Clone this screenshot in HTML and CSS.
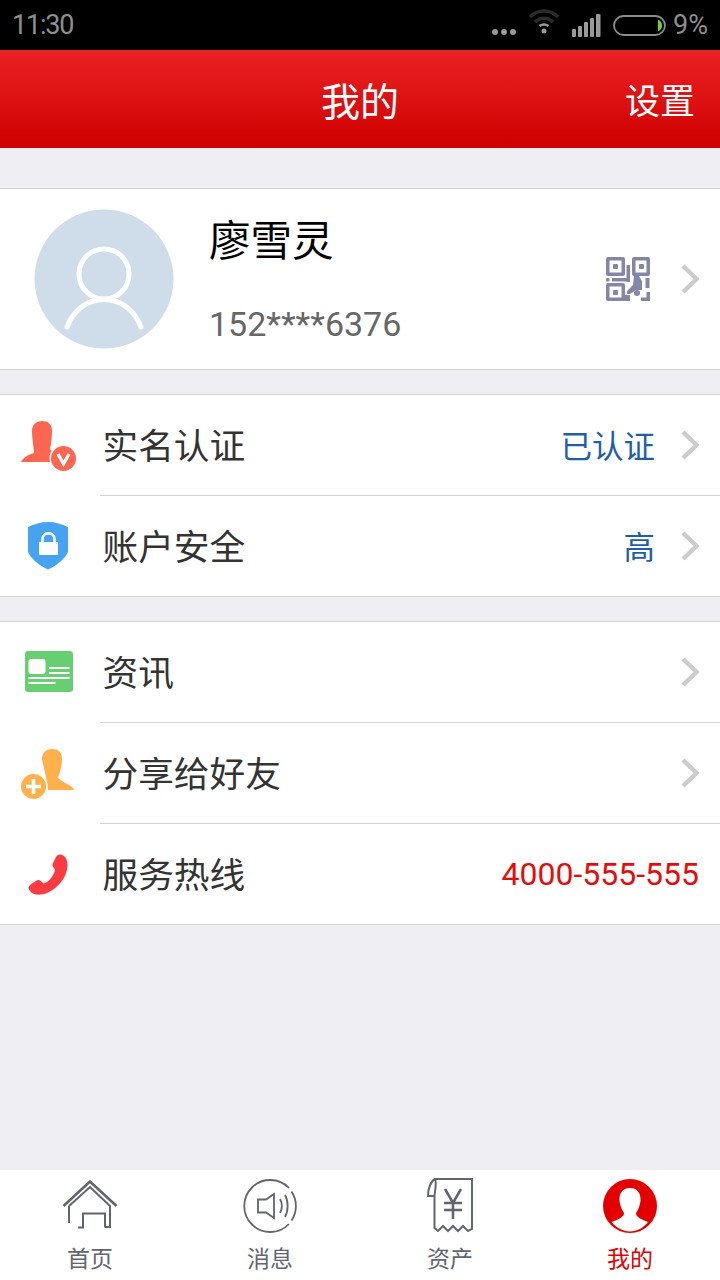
FILE: index.html
```html
<!DOCTYPE html>
<html lang="zh-CN">
<head>
    <meta charset="UTF-8">
    <meta name="viewport" content="width=device-width, initial-scale=1.0">
    <title>我的</title>
    <link rel="stylesheet" href="styles.css">
</head>
<body>

    <div class="status-bar">
        <span class="status-time">11:30</span>
        <div class="status-right">
            <svg class="status-dots" width="26" height="8" viewBox="0 0 26 8"><circle cx="4" cy="4" r="3"/><circle cx="13" cy="4" r="3"/><circle cx="22" cy="4" r="3"/></svg>
            <svg class="status-wifi" width="32" height="26" viewBox="0 0 32 26" fill="none">
                <path d="M2 9C10 1 22 1 30 9" stroke="#2b2b2b" stroke-width="3.5"/>
                <path d="M7 14C12 9 20 9 25 14" stroke="#2b2b2b" stroke-width="3.5"/>
                <path d="M11.500 18C14 16 18 16 20.500 18" stroke="#9a9a9a" stroke-width="2.500"/>
                <circle cx="16" cy="23" r="2.500" fill="#9a9a9a"/>
            </svg>
            <svg class="status-signal" width="29" height="23" viewBox="0 0 29 23" fill="#9a9a9a">
                <rect x="0" y="15" width="4" height="8" rx="1"/><rect x="6" y="12" width="4" height="11" rx="1"/><rect x="12" y="8" width="4" height="15" rx="1"/><rect x="18" y="4" width="4" height="19" rx="1"/><rect x="24" y="0" width="4.500" height="23" rx="1"/>
            </svg>
            <svg class="status-battery" width="53" height="21" viewBox="0 0 53 21">
                <rect x="1" y="1" width="51" height="19" rx="9.500" fill="none" stroke="#8c8c8c" stroke-width="1.800"/>
                <path d="M45 4.500C48 6 49 8 49 10.500C49 13 48 15 45 16.500Z" fill="#74d12a"/>
            </svg>
            <span class="status-percent">9%</span>
        </div>
    </div>

    <div class="title-bar">
        <h1>我的</h1>
        <a class="title-action">设置</a>
    </div>

    <div class="profile-card">
        <svg class="avatar" width="140" height="140" viewBox="0 0 140 140">
            <circle cx="70" cy="70" r="69.500" fill="#cfddeb"/>
            <circle cx="70" cy="65" r="25" fill="none" stroke="#fff" stroke-width="5"/>
            <path d="M33 118C40 100 54 90.500 70 90.500C86 90.500 100 100 107 118" fill="none" stroke="#fff" stroke-width="5" stroke-linecap="round"/>
        </svg>
        <div class="profile-info">
            <div class="profile-name">廖雪灵</div>
            <div class="profile-phone">152****6376</div>
        </div>
        <svg class="qr-icon" width="44" height="44" viewBox="0 0 44 44" fill="#8585a6">
            <path fill-rule="evenodd" d="M2 0H17Q19 0 19 2V17Q19 19 17 19H2Q0 19 0 17V2Q0 0 2 0ZM3.500 3.500V15.500H15.500V3.500Z"/>
            <rect x="7" y="7" width="5" height="5" rx="1"/>
            <path fill-rule="evenodd" d="M28 0H42Q44 0 44 2V17Q44 19 42 19H28Q26 19 26 17V2Q26 0 28 0ZM29.500 3.500V15.500H40.500V3.500Z"/>
            <rect x="33" y="7" width="5" height="5" rx="1"/>
            <path fill-rule="evenodd" d="M2 26H17Q19 26 19 28V42Q19 44 17 44H2Q0 44 0 42V28Q0 26 2 26ZM3.500 29.500V40.500H15.500V29.500Z"/>
            <rect x="7" y="33" width="5" height="5" rx="1"/>
            <rect x="0" y="21" width="3.500" height="3.500" rx="1"/>
            <rect x="6" y="21" width="15" height="3.500"/>
            <rect x="20.500" y="8" width="3.500" height="17"/>
            <path d="M28 19H33L36 24V33H30L24 37H21V34L27 28Z"/>
            <rect x="39.500" y="21" width="4" height="10"/>
            <circle cx="31" cy="36" r="3"/>
            <path d="M18 38H24V44H17Z"/>
            <path d="M35 44H44V35H40.500V40.500H35Z"/>
        </svg>
        <svg class="chevron" width="18" height="30" viewBox="0 0 18 30"><path d="M2 2L15.500 15L2 28" fill="none" stroke="#cccccc" stroke-width="4.500"/></svg>
    </div>

    <div class="list-group">
        <div class="list-row">
            <div class="row-icon">
                <svg width="56" height="50" viewBox="0 0 56 50">
                    <path fill="#fb6650" d="M12 10C12 3 17 0 22 0C28 0 32 3 32 10C32 17 31 24 30 28L35 34V41H1C3 36 10 33 14 32C14 28 12 18 12 10Z"/>
                    <circle cx="43.500" cy="37.500" r="14" fill="#fff"/>
                    <circle cx="43.500" cy="37.500" r="12.500" fill="#fb6650"/>
                    <path d="M38 33L43.500 43L49 33" fill="none" stroke="#fff" stroke-width="3.200"/>
                </svg>
            </div>
            <div class="row-body">
                <span class="row-label">实名认证</span>
                <span class="row-value">已认证</span>
                <svg class="chevron" width="18" height="30" viewBox="0 0 18 30"><path d="M2 2L15.500 15L2 28" fill="none" stroke="#cccccc" stroke-width="4.500"/></svg>
            </div>
        </div>
        <div class="list-row">
            <div class="row-icon">
                <svg width="42" height="48" viewBox="0 0 42 48">
                    <path fill="#46a3f0" d="M21 0C28 0 35 2 41 5V30C38 37 29 44 21 47.500C13 44 4 37 1 30V5C7 2 14 0 21 0Z"/>
                    <rect x="12" y="20" width="19" height="13" rx="1" fill="#fff"/>
                    <path d="M15.500 21V17C15.500 9.500 27.500 9.500 27.500 17V21" fill="none" stroke="#fff" stroke-width="2.600"/>
                </svg>
            </div>
            <div class="row-body">
                <span class="row-label">账户安全</span>
                <span class="row-value">高</span>
                <svg class="chevron" width="18" height="30" viewBox="0 0 18 30"><path d="M2 2L15.500 15L2 28" fill="none" stroke="#cccccc" stroke-width="4.500"/></svg>
            </div>
        </div>
    </div>

    <div class="list-group">
        <div class="list-row">
            <div class="row-icon">
                <svg class="news-icon" width="48" height="41" viewBox="0 0 48 41">
                    <rect width="48" height="41" rx="3" fill="#67cf72"/>
                    <rect x="3.500" y="8" width="17" height="15" rx="3" fill="#fff"/>
                    <rect x="24" y="16" width="20.500" height="2" fill="#fff"/>
                    <rect x="24" y="21" width="20.500" height="2" fill="#fff"/>
                    <rect x="3.500" y="26" width="41" height="2" fill="#fff"/>
                    <rect x="3.500" y="31" width="27" height="2" fill="#fff"/>
                </svg>
            </div>
            <div class="row-body">
                <span class="row-label">资讯</span>
                <svg class="chevron" width="18" height="30" viewBox="0 0 18 30"><path d="M2 2L15.500 15L2 28" fill="none" stroke="#cccccc" stroke-width="4.500"/></svg>
            </div>
        </div>
        <div class="list-row">
            <div class="row-icon">
                <svg width="54" height="50" viewBox="0 0 54 50">
                    <path fill="#fdb04c" d="M21 10C21 3 26 0 31 0C37 0 41 3 41 10C41 17 39 24 37 28C38 32 47 34 52 39L53 41H27C27 35 23 20 21 10Z"/>
                    <circle cx="12.500" cy="37.500" r="14" fill="#fff"/>
                    <circle cx="12.500" cy="37.500" r="12.500" fill="#fdb04c"/>
                    <path d="M12.500 30V45M5 37.500H20" stroke="#fff" stroke-width="3.600"/>
                </svg>
            </div>
            <div class="row-body">
                <span class="row-label">分享给好友</span>
                <svg class="chevron" width="18" height="30" viewBox="0 0 18 30"><path d="M2 2L15.500 15L2 28" fill="none" stroke="#cccccc" stroke-width="4.500"/></svg>
            </div>
        </div>
        <div class="list-row">
            <div class="row-icon">
                <svg width="40" height="41" viewBox="0 0 40 41">
                    <path fill="#fb3a42" d="M28 3C30 0 33 0 35 1.500C38 3 39.500 7 39.500 11C39.500 22 31 34 19 39C13 41.500 5 41.500 2 37C0 34.500 0 33 2 31L8.500 26.500C10 25.500 12 26 13.500 27.500L15.500 29.500C20 29 26 22 27 15.500L25 13C24 11.500 24.500 9.500 25.500 8Z"/>
                </svg>
            </div>
            <div class="row-body">
                <span class="row-label">服务热线</span>
                <span class="row-phone">4000-555-555</span>
            </div>
        </div>
    </div>

    <div class="tab-bar">
        <div class="tab-item">
            <svg width="56" height="52" viewBox="0 0 56 52" fill="none" stroke="#62656f" stroke-width="2">
                <path d="M1.500 26L28 1.500L54.500 26" stroke-width="2.600"/>
                <path d="M7 26L28 7L48 26V47H43"/>
                <path d="M7 26V43"/>
                <path d="M43 47.500V33.500H21V47.500H16"/>
            </svg>
            <span>首页</span>
        </div>
        <div class="tab-item">
            <svg width="54" height="54" viewBox="0 0 54 54" fill="none" stroke="#62656f" stroke-width="1.800">
                <path d="M46 9A26 26 0 1 0 46 45"/>
                <path d="M48.500 12.500A26 26 0 0 1 48.500 41.500"/>
                <path d="M15 20.500H23L31 15V39L23 33.500H15Z"/>
                <path d="M37 20C39.500 24 39.500 30 37 34"/>
                <path d="M42 16C45.500 22 45.500 32 42 38"/>
            </svg>
            <span>消息</span>
        </div>
        <div class="tab-item">
            <svg width="46" height="56" viewBox="0 0 46 56" fill="none" stroke="#62656f" stroke-width="2">
                <path d="M8 1H45V51L41 53L36 48L31 53L26 48L21 53L16 48L11 53L7.500 50V18H1C1 10 4 3 8 1C10 4 8 12 7.500 18"/>
                <path d="M18 11L26 25L34 11M17 25H35M17 32H35M26 25V41" stroke-width="2.600"/>
            </svg>
            <span>资产</span>
        </div>
        <div class="tab-item tab-active">
            <svg width="54" height="54" viewBox="0 0 54 54">
                <circle cx="27" cy="27" r="27" fill="#e20000"/>
                <path fill="#fff" d="M27 9C35 9 38 15 37.500 22C37 27 35 31 33 34C33 38 38 40 45 43C40 49 34 52.500 27 52.500C20 52.500 14 49 8.500 43C16 40 21 38 21 34C19 31 17 27 16.500 22C16 15 19 9 27 9Z"/>
            </svg>
            <span>我的</span>
        </div>
    </div>

</body>
</html>
```

FILE: styles.css
```css
* {
    box-sizing: border-box;
}
html, body {
    height: 100%;
}
body {
    margin: 0;
    display: flex;
    flex-direction: column;
    height: 1280px;
    overflow: hidden;
    background-color: #eeeef3;
    font-family: "Noto Sans CJK SC", Roboto, sans-serif;
    color: #333;
}

/* status bar */
.status-bar {
    height: 50px;
    flex: none;
    background-color: #000;
    color: #8f8f8f;
    display: flex;
    align-items: center;
    justify-content: space-between;
    padding: 0 12px;
    font-family: Roboto, sans-serif;
}
.status-time {
    font-size: 27px;
    letter-spacing: -1.2px;
}
.status-right {
    display: flex;
    align-items: center;
}
.status-dots {
    fill: #9a9a9a;
    margin-top: 14px;
    margin-right: 11px;
}
.status-wifi {
    margin-top: -8px;
    margin-right: 12px;
}
.status-signal {
    margin-top: 1px;
    margin-right: 12px;
}
.status-battery {
    margin-right: 7px;
}
.status-percent {
    font-size: 27px;
}

/* header */
.title-bar {
    height: 98px;
    flex: none;
    position: relative;
    background: linear-gradient(#ea2224, #cf0000);
    display: flex;
    align-items: center;
    justify-content: center;
    color: #fff;
}
.title-bar h1 {
    margin: 0;
    font-size: 39px;
    font-weight: 400;
    line-height: 1;
}
.title-action {
    position: absolute;
    right: 25px;
    top: 31px;
    font-size: 35px;
    line-height: 1;
}

/* profile */
.profile-card {
    height: 182px;
    flex: none;
    margin-top: 40px;
    background-color: #fff;
    border-top: 1px solid #d3d3d6;
    border-bottom: 1px solid #d3d3d6;
    display: flex;
    align-items: center;
    padding: 0 21px 0 34px;
}
.avatar {
    flex: none;
}
.profile-info {
    flex: 1;
    margin-left: 35px;
}
.profile-name {
    font-size: 41.5px;
    line-height: 50px;
    color: #000;
}
.profile-phone {
    font-family: Roboto, sans-serif;
    font-size: 34px;
    line-height: 42px;
    color: #666;
    margin-top: 40px;
}
.qr-icon {
    flex: none;
    margin-right: 31px;
}
.chevron {
    flex: none;
}

/* list */
.list-group {
    flex: none;
    margin-top: 24px;
    background-color: #fff;
    border-top: 1px solid #d3d3d6;
    border-bottom: 1px solid #d3d3d6;
}
.list-row {
    height: 101px;
    display: flex;
    align-items: stretch;
}
.list-row:last-child {
    height: 100px;
}
.row-icon {
    width: 100px;
    flex: none;
    display: flex;
    align-items: center;
    justify-content: center;
    padding-right: 4px;
}
.news-icon {
    margin-top: -2px;
    margin-left: 2px;
}
.row-body {
    flex: 1;
    display: flex;
    align-items: center;
    padding: 0 21px 0 2.5px;
    border-bottom: 1px solid #d3d3d6;
}
.list-row:last-child .row-body {
    border-bottom: 0;
}
.row-label {
    flex: 1;
    font-size: 35.7px;
    color: #333;
    margin-bottom: 3px;
}
.row-value {
    font-size: 31.5px;
    color: #1f5fa9;
    margin-right: 26px;
    margin-bottom: 3px;
}
.row-phone {
    font-family: Roboto, sans-serif;
    font-size: 32px;
    color: #e50c0c;
}

/* bottom tabs */
.tab-bar {
    margin-top: auto;
    height: 110px;
    flex: none;
    background-color: #fff;
    display: flex;
}
.tab-item {
    flex: 1;
    display: flex;
    flex-direction: column;
    align-items: center;
    padding-top: 8px;
    color: #62656f;
    font-size: 23px;
    line-height: 30px;
}
.tab-item svg {
    height: 56px;
    margin-bottom: 8px;
}
.tab-active {
    color: #e20000;
}
```
